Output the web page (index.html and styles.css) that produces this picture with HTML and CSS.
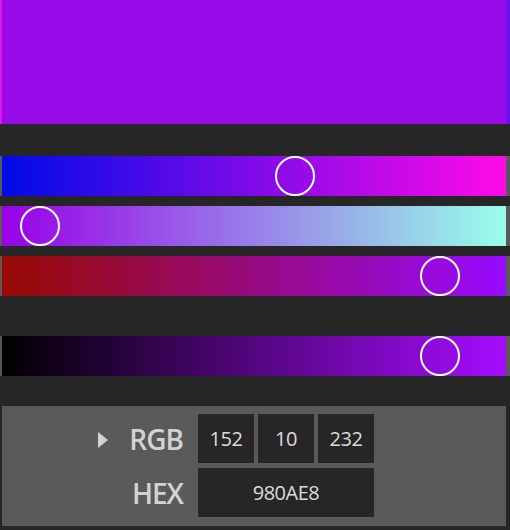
FILE: index.html
```html
<!DOCTYPE html>
<html>
<head>
<meta charset="utf-8">
<link rel="stylesheet" href="styles.css">
</head>
<body>
<div class="picker">
  <div class="swatch"></div>
  <div class="sliders">
    <div class="track"><div class="bar bar-r"><span class="thumb" style="left:273px"></span></div></div>
    <div class="track"><div class="bar bar-g"><span class="thumb" style="left:18px"></span></div></div>
    <div class="track"><div class="bar bar-b"><span class="thumb" style="left:418px"></span></div></div>
    <div class="track track-alpha"><div class="bar bar-v"><span class="thumb" style="left:418px"></span></div></div>
  </div>
  <div class="panel">
    <div class="label"><span class="tri"></span><span>RGB</span></div>
    <div class="fields">
      <div class="field">152</div>
      <div class="field">10</div>
      <div class="field">232</div>
    </div>
    <div class="label"><span>HEX</span></div>
    <div class="fields">
      <div class="field wide">980AE8</div>
    </div>
  </div>
</div>
</body>
</html>
```
FILE: styles.css
```css
html, body {
  margin: 0;
  padding: 0;
  background: #262626;
  overflow: hidden;
}
.picker {
  width: 510px;
  height: 530px;
  display: flex;
  flex-direction: column;
}
.swatch {
  height: 124px;
  background: linear-gradient(to right, #e012f0 0, #e012f0 2px, #980ae8 2px, #980ae8 506px, #6c10f0 506px);
}
.sliders {
  margin-top: 32px;
  display: flex;
  flex-direction: column;
  gap: 10px;
}
.track {
  height: 40px;
  background: #595959;
  padding: 0 4px 0 2px;
}
.track-alpha { margin-top: 30px; }
.bar {
  position: relative;
  height: 40px;
}
.bar-r { background: linear-gradient(to right, rgb(0,10,232), rgb(255,10,232)); }
.bar-g { background: linear-gradient(to right, rgb(152,0,232), rgb(152,255,232)); }
.bar-b { background: linear-gradient(to right, rgb(152,10,0), rgb(152,10,255)); }
.bar-v { background: linear-gradient(to right, #000000, #a70cff); }
.thumb {
  position: absolute;
  top: 0;
  width: 36px;
  height: 36px;
  border: 2px solid #fff;
  border-radius: 50%;
}
.panel {
  margin: 30px 4px 0 2px;
  height: 120px;
  box-sizing: border-box;
  background: #5a5a5a;
  padding-top: 8px;
  display: grid;
  grid-template-columns: 181px 176px;
  column-gap: 15px;
  row-gap: 5px;
  grid-auto-rows: 49px;
  font-family: "Open Sans", sans-serif;
}
.label {
  display: flex;
  align-items: center;
  justify-content: flex-end;
  gap: 21px;
  color: #d2d2d2;
  font-size: 28px;
  font-weight: 600;
  letter-spacing: -1px;
}
.tri {
  width: 0;
  height: 0;
  border-top: 8px solid transparent;
  border-bottom: 8px solid transparent;
  border-left: 10px solid #d2d2d2;
  margin-top: 2px;
}
.fields {
  display: flex;
  gap: 4px;
}
.field {
  width: 56px;
  height: 49px;
  background: #262626;
  color: #dcdcdc;
  font-size: 20px;
  display: flex;
  align-items: center;
  justify-content: center;
  letter-spacing: -0.5px;
}
.field.wide { width: 176px; }
```
